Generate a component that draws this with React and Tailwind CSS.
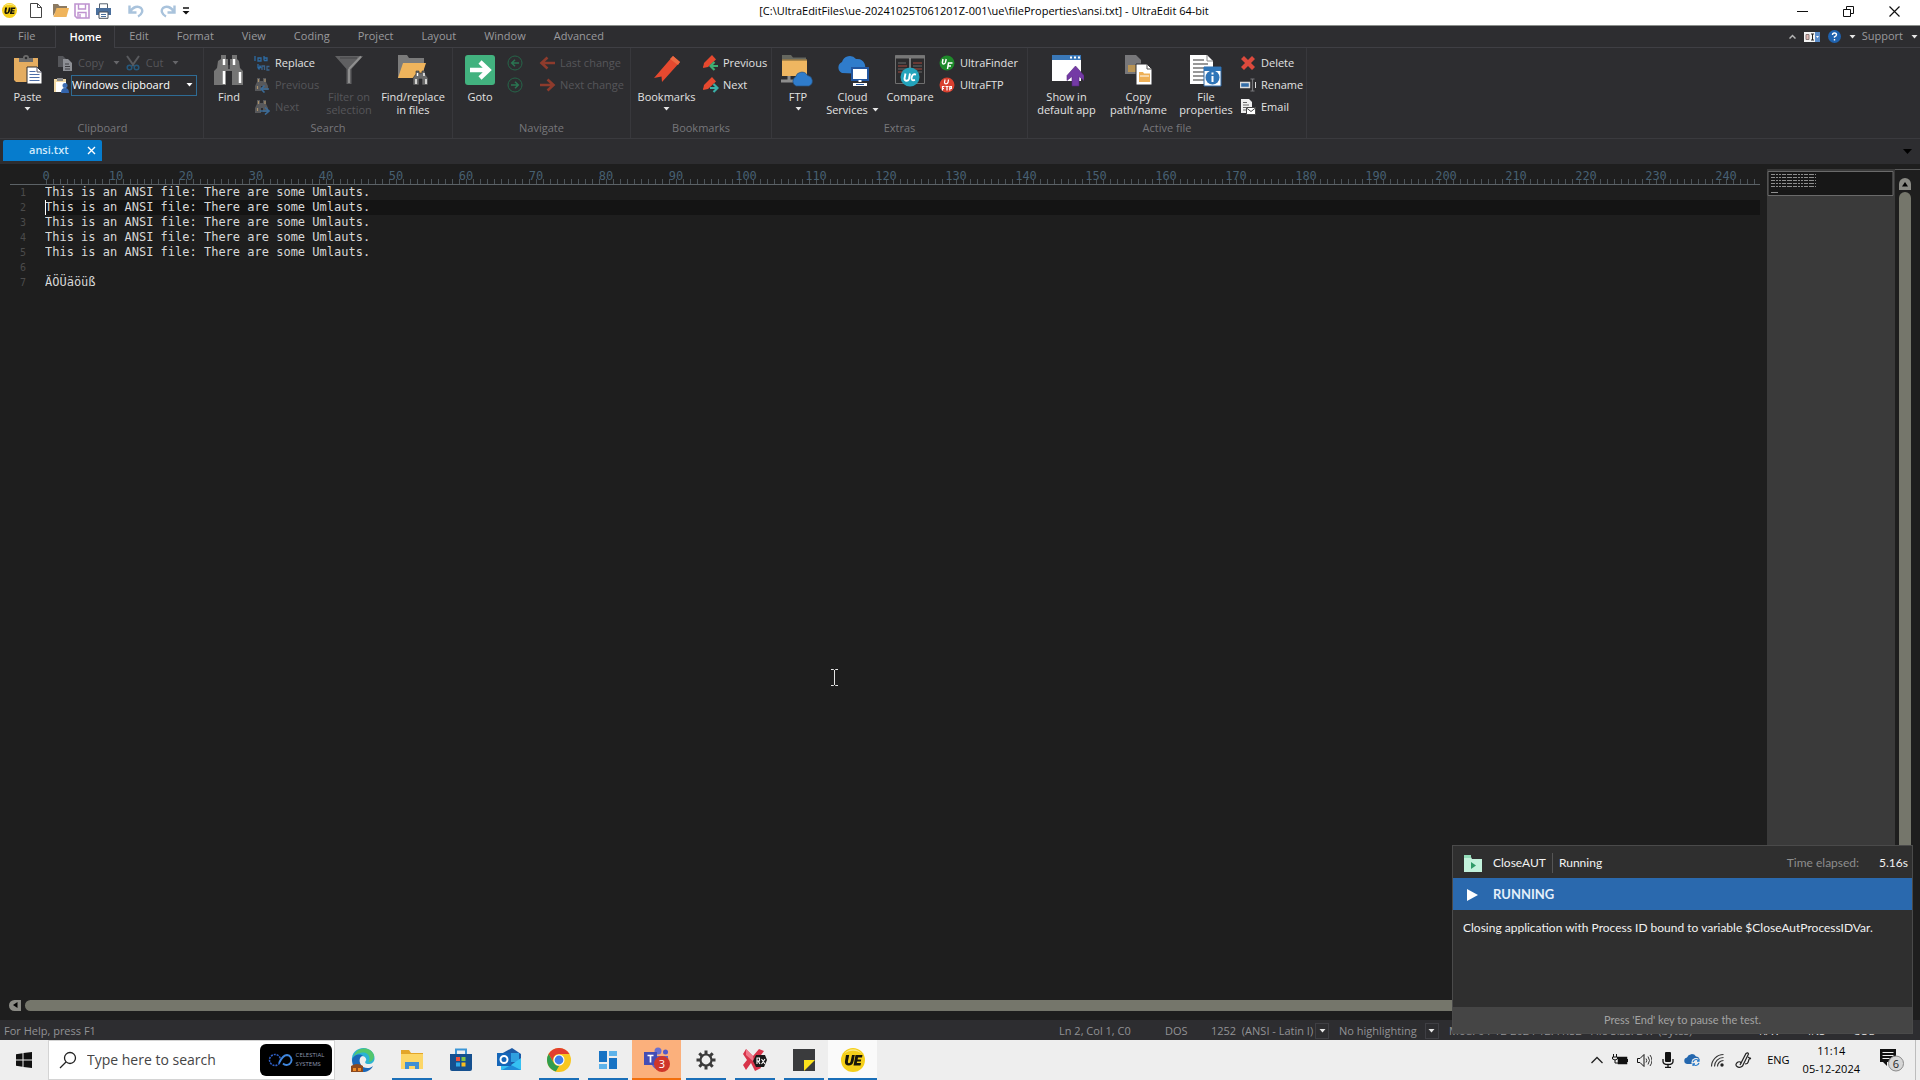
import React from "react";

const UI = "font-['Open_Sans','Noto_Sans',sans-serif]";

function Svg({ w = 16, h, vb, className = "", children }) {
  const hh = h || w;
  return (
    <svg width={w} height={hh} viewBox={vb || `0 0 ${w} ${hh}`} className={`shrink-0 ${className}`} aria-hidden="true">
      {children}
    </svg>
  );
}

const Caret = ({ color = "#e6e6e6", className = "" }) => (
  <Svg w={7} h={4} className={className}>
    <path d="M0.5 0h6L3.5 3.5z" fill={color} />
  </Svg>
);

function UEBadge({ w }) {
  return (
    <Svg w={w} vb="0 0 24 24">
      <circle cx="12" cy="12" r="12" fill="#f5cf1a" />
      <path d="M3 6a11 11 0 0 1 18 0a14 14 0 0 0-18 0z" fill="#fbe98a" />
      <path d="M5 7h3.200l-1.300 6.500q-.3 1.700 1 1.700t1.700-1.700L11 7h2.800l-1.300 6.600q-.8 3.900-4.800 3.900t-3.800-3.700zM14.500 7h7l-.5 2.400h-4l-.4 2h3.600l-.4 2.200h-3.600l-.4 1.500h4.200l-.5 2.300h-7z" fill="#17150a" />
    </Svg>
  );
}

/* ---------- title bar icons ---------- */
const NewIcon = () => (
  <Svg w={14} h={17}><path d="M1.500 1.500h7l4 4v10h-11z" fill="#fff" stroke="#444" /><path d="M8.500 1.500v4h4" fill="none" stroke="#444" /></Svg>
);
const OpenIcon = () => (
  <Svg w={17} h={15}><path d="M1 13V1h5l1.500 2H15v4H5z" fill="#8b7a62" /><path d="M4.500 5H17l-2.500 9H1.500z" fill="#efb45c" /></Svg>
);
const SaveIcon = () => (
  <Svg w={16}><path d="M1 1h14v14H3l-2-2z" fill="#fff" stroke="#bf93d0" strokeWidth="1.600" /><path d="M4.500 1v5h7V1M4 15V9.500h8V15M6 11v4" fill="none" stroke="#bf93d0" strokeWidth="1.400" /></Svg>
);
const PrintIcon = () => (
  <Svg w={17} h={16}><path d="M4.500 5V.8h8V5" fill="#fff" stroke="#56616e" /><path d="M1 5h15v7H1z" fill="#4a6f9c" /><path d="M4 9h9v6.300H4z" fill="#fff" stroke="#46505c" /><path d="M6 11.500h5M6 13.500h5" stroke="#4a6f9c" /></Svg>
);
const UndoIcon = ({ flip }) => (
  <Svg w={16} h={14} className={flip ? "-scale-x-100" : ""}>
    <path d="M1.500 1.500v7h7M2 8C5 2.500 10 1.500 13 4c2.500 2.500 1 6.500-3 8.500" fill="none" stroke="#a9c3dc" strokeWidth="2.400" />
  </Svg>
);

/* ---------- ribbon icons, 32px ---------- */
const PasteIcon = () => (
  <Svg w={32}><path d="M2 4h24v24H4l-2-2z" fill="#e5ad60" /><path d="M7 8V4h4q0-3 3-3t3 3h4v4z" fill="#6c6c6c" /><circle cx="14" cy="4" r="1.300" fill="#2d2d30" /><path d="M15 13h10l5 5v12H15z" fill="#fff" stroke="#2d2d30" /><path d="M25 13v5h5" fill="none" stroke="#556" /><path d="M17.500 17.500h6M17.500 20.500h10M17.500 23.500h10M17.500 26.500h10" stroke="#4f6fa8" /></Svg>
);
const Bino = ({ w = 32 }) => (
  <Svg w={w} vb="0 0 32 32"><path d="M8 1h5v4h2v6h2V5h2V1h5v4l2 2 1 7 3 3v14H19V17h-6v14H1V17l3-3 1-7 3-2z" fill="#757575" /><path d="M11 5v6M11 17v13M21 5v6M27 18v11" stroke="#fff" strokeWidth="2.500" /><path d="M16 6v9" stroke="#2d2d30" strokeWidth="1.500" /></Svg>
);
const FunnelIcon = () => (
  <Svg w={28} h={30}><path d="M0 1h28L16.500 14v15h-5V14z" fill="#606062" /><path d="M14 14L26 1.500M14 14v14" stroke="#8f8f8f" strokeWidth="2" /><path d="M5 3h17" stroke="#525254" strokeWidth="2" /></Svg>
);
const FindFilesIcon = () => (
  <Svg w={32}><path d="M1 24V1h9l2 3h15v20z" fill="#7b7b7b" /><path d="M6 9h23l-5 15H1z" fill="#efb45c" /><path d="M19 17h3v2h3v-2h3v3l3 4v7h-6v-6h-3v6h-6v-7l3-4z" fill="#6b6b6b" stroke="#2d2d30" strokeWidth=".6" /><path d="M20.500 19v3M19 25v5M27 19v3M29 25v5" stroke="#fff" strokeWidth="1.400" /></Svg>
);
const GotoIcon = () => (
  <Svg w={32}><rect x="1" y="1" width="30" height="30" rx="3" fill="#42b27f" /><path d="M6 16h17M16 8l8.500 8-8.500 8" fill="none" stroke="#fff" strokeWidth="4.500" /></Svg>
);
const BookmarkIcon = () => (
  <Svg w={32}><path d="M22 2l7 6-18 20-.5-5.500L3 24z" fill="#e6492f" /><path d="M22 2l7 6-2 3-8-6z" fill="#ec6a42" /></Svg>
);
const FtpIcon = () => (
  <Svg w={34} h={33}><path d="M1 1h9l2 2.500h13V22H1z" fill="#65675f" /><path d="M1 6h25v16H1z" fill="#efb661" /><path d="M1 6h25" stroke="#9a7a45" strokeWidth="1.500" /><path d="M8 22v4M0 27h13" stroke="#8d8d8d" strokeWidth="3" /><path d="M15 32a5 5 0 0 1-.5-9 6.500 6.500 0 0 1 12-1.500 5.500 5.500 0 0 1 1.500 10.500z" fill="#2f7ccb" stroke="#26517e" strokeWidth=".7" /></Svg>
);
const CloudIcon = () => (
  <Svg w={34} h={33}><path d="M6 19a6 6 0 0 1 0-11A8 8 0 0 1 20 5a8 8 0 0 1 9 10v5z" fill="#2f7ccb" /><path d="M16 14h16v12H16z" fill="#fff" stroke="#2256a0" strokeWidth="2" /><path d="M24 26v2M17 30.500h14" stroke="#fff" strokeWidth="3" /><path d="M20 30.500h8" stroke="#2256a0" /></Svg>
);
const CompareIcon = () => (
  <Svg w={32} h={33}><path d="M1.500 1.500h29v28h-29z" fill="#2b2b2d" stroke="#6f6f6f" /><path d="M1 3h30" stroke="#777" strokeWidth="3" /><path d="M16 4v12" stroke="#9a9a9a" strokeWidth="1.500" /><path d="M4 12h9M4 18h6M19 9h9M19 15h9" stroke="#aa4a3e" /><path d="M4 9h8M4 15h8M19 12h9M24 18h4" stroke="#6b6b6b" /><circle cx="16" cy="23" r="9.500" fill="#23a3bb" /><path d="M11.500 19.500l-1 5q0 2.200 2 2.200t2.600-2.200l.9-5M22 20.600q-3.300-1.400-4.300 2.600t3.300 2.700" fill="none" stroke="#fff" strokeWidth="1.900" /></Svg>
);
const ShowAppIcon = () => (
  <Svg w={34} h={33}><path d="M2 1h29v26H2z" fill="#fff" /><path d="M2 1h29v5H2z" fill="#3a78b8" /><path d="M20 3.500h2M24 3.500h2M28 3.500h2" stroke="#fff" strokeWidth="2" /><path d="M25.500 12l8.500 9.500v5l-5-4V32h-7v-9.500l-5 4v-5z" fill="#743aa5" stroke="#55267e" strokeWidth=".6" /></Svg>
);
const CopyPathIcon = () => (
  <Svg w={32}><path d="M2 1h11l5 5v14H2z" fill="#77777a" /><path d="M5 11h9v7H5z" fill="#b99455" /><path d="M13 10h11l5 5v16H13z" fill="#fff" stroke="#2d2d30" /><path d="M24 10v5h5" fill="none" stroke="#555" /><path d="M16 18h4l1 1.500h6V28H16z" fill="#eeb057" /><path d="M17 22h9" stroke="#fff" /></Svg>
);
const FilePropsIcon = () => (
  <Svg w={34} h={33}><path d="M1 1h17l6 6v23H1z" fill="#fff" /><path d="M18 1v6h6" fill="none" stroke="#888" /><path d="M4 6h11M4 10h15M4 14h17M4 18h12M4 22h12M4 26h12" stroke="#777" strokeWidth="1.300" /><path d="M15 13h17v19H15z" fill="#fff" stroke="#2f6ba8" strokeWidth="1" /><path d="M15 13h17v4H15z" fill="#2f75b8" /><circle cx="23.500" cy="23.500" r="7" fill="#2f75b8" /><path d="M23.500 22v6M23.500 18.500v2" stroke="#fff" strokeWidth="2" /></Svg>
);

/* ---------- ribbon icons, 16px ---------- */
const CopyIcon = () => (
  <Svg><path d="M1 1h5l3 3v8H1z" fill="#55565a" /><path d="M6 4h5l4 4v8H6z" fill="#8d8f94" /><path d="M8 9h4M8 11.500h5M8 14h5" stroke="#3c3c40" /></Svg>
);
const CutIcon = () => (
  <Svg><path d="M2 1l7 10M14 1L7 11" stroke="#595a5e" strokeWidth="2" /><circle cx="4.500" cy="12.500" r="2.300" fill="none" stroke="#25587c" strokeWidth="1.500" /><circle cx="11.500" cy="12.500" r="2.300" fill="none" stroke="#25587c" strokeWidth="1.500" /></Svg>
);
const ClipUserIcon = () => (
  <Svg><path d="M1 2h12v13H1z" fill="#f1d9a6" /><path d="M3 5h10v10H3z" fill="#fff" /><path d="M4 1h6v3H4z" fill="#8a8a8a" /><circle cx="12" cy="8.500" r="2.500" fill="#3f6fb5" /><path d="M8 16q0-5 4-5t4 5z" fill="#3465ad" /></Svg>
);
const ReplaceIcon = () => (
  <Svg><path d="M1 1v5M4 6V3h3v3zM10 5.500V1M10 5.500h3V3h-3M4 9v3.500h3l-1.500-2M4 12.500l1.500 2" fill="none" stroke="#2d6ba3" strokeWidth="1.300" /><path d="M8 15v-4h2.500v4M15.500 11.500h-2.500V15h2.500" fill="none" stroke="#3a6188" strokeWidth="1.300" /></Svg>
);
const FindSmall = ({ right }) => (
  <Svg><path d="M3 1h3v3h3V1h3v4l2 4v4H9V9H7v5H1V9l2-4z" fill="#57585b" /><path d="M4.500 2v3M3.500 9v3M11 2v3" stroke="#a9906a" strokeWidth="1.200" />{right ? <path d="M6 12h8M11 8.500l4 3.500-4 3.500" fill="none" stroke="#3a6b98" strokeWidth="1.600" /> : <path d="M15 12H8M10.500 8.500L7 12l3.500 3.500" fill="none" stroke="#3a6b98" strokeWidth="1.600" />}</Svg>
);
const CircleArrow = ({ right }) => (
  <Svg className={right ? "" : "-scale-x-100"}><circle cx="8" cy="8" r="7" fill="none" stroke="#266549" /><path d="M4 8h7M8 4.800L11.300 8 8 11.200" fill="none" stroke="#2a7552" strokeWidth="1.500" /></Svg>
);
const RedArrow = ({ right }) => (
  <Svg w={17} h={14} className={right ? "" : "-scale-x-100"}><path d="M1 7h13M8.500 1.500L14.500 7l-6 5.500" fill="none" stroke="#8e3b2c" strokeWidth="2.600" /></Svg>
);
const MarkSmall = ({ right }) => (
  <Svg w={17} h={16}><path d="M10 0l4 4.500L6 12l-5 1 1-5z" fill="#e6492f" /><path d="M7 4l-6 8 5-1z" fill="#e6492f" />{right ? <path d="M8 11h7M11.500 7l4 4-4 4" fill="none" stroke="#3ab0a8" strokeWidth="2.200" /> : <path d="M9 11h7M12.500 7l-4 4 4 4" fill="none" stroke="#3fae72" strokeWidth="2.200" />}</Svg>
);
const UFIcon = () => (
  <Svg><circle cx="8" cy="8" r="7.500" fill="#1e8a2a" /><path d="M4 4l-.6 3.400q0 1.600 1.300 1.600t1.800-1.600L7.200 4M8.500 14l1-6h4M9 11h3" fill="none" stroke="#fff" strokeWidth="1.500" /></Svg>
);
const UFtpIcon = () => (
  <Svg><circle cx="8" cy="8" r="7.500" fill="#d9402f" /><path d="M6 2.500l-.5 3q0 1.400 1.500 1.400t2-1.400l.5-3M3.500 13.500v-4h2M3.500 11.500h1.500M6.500 9.500h3M8 9.500v4M10.800 13.500v-4h1.600v2h-1.600" fill="none" stroke="#fff" strokeWidth="1.200" /></Svg>
);
const DeleteIcon = () => (
  <Svg><path d="M4 1l4 4 4-4 3 3-4 4 4 4-3 3-4-4-4 4-3-3 4-4-4-4z" fill="#dc4a3d" /></Svg>
);
const RenameIcon = () => (
  <Svg><path d="M.5 5.500h9v5h-9z" fill="#336da8" stroke="#dcdcdc" strokeWidth="1.400" /><path d="M12.500 2v12M10.500 2h4M10.500 14h4" stroke="#77777a" strokeWidth="1.200" /><path d="M15.500 5v6" stroke="#ddd" /></Svg>
);
const EmailIcon = () => (
  <Svg><path d="M1 0h8l3 3v11H1z" fill="#efefef" /><path d="M3 3.500h4M3 6h6M3 8.500h3M3 11h3" stroke="#666" /><path d="M6.500 8.500h9v7h-9z" fill="#fff" stroke="#444" /><path d="M6.500 9l4.500 3.500L15.500 9" fill="none" stroke="#444" /></Svg>
);

/* ---------- ribbon building blocks ---------- */
function Big({ icon, lines, caret, inlineCaret, disabled, className }) {
  return (
    <button type="button" disabled={disabled} className={`flex flex-col items-center pt-1.5 ${disabled ? "text-[#56565a]" : "text-[#e2e2e2]"} ${className}`}>
      <span className="flex h-8 items-center justify-center">{icon}</span>
      <span className="mt-1 flex flex-col items-center text-[11px] leading-[13px] whitespace-nowrap">
        <span>{lines[0]}</span>
        {lines[1] && (
          <span className="flex items-center gap-1">
            {lines[1]}
            {inlineCaret && <Caret />}
          </span>
        )}
      </span>
      {caret && <Caret className="mt-1" />}
    </button>
  );
}

function Small({ icon, label, disabled, caret }) {
  return (
    <button type="button" disabled={disabled} className={`flex h-[22px] items-center gap-[5px] text-[11px] whitespace-nowrap ${disabled ? "text-[#56565a]" : "text-[#e2e2e2]"}`}>
      <span className="flex w-4 justify-center">{icon}</span>
      {label}
      {caret && <Caret color="#66666a" className="ml-1" />}
    </button>
  );
}

function Group({ label, className, children }) {
  return (
    <section aria-label={label} className={`flex flex-col border-r border-[#38383c] ${className}`}>
      <div className="flex h-[72px]">{children}</div>
      <div className="text-center text-[11px] leading-4 text-[#77777b]">{label}</div>
    </section>
  );
}

const Col = ({ className = "", children }) => <div className={`flex flex-col items-start pt-1 ${className}`}>{children}</div>;

function TitleBar() {
  return (
    <header className="grid h-[25px] grid-cols-[1fr_auto_1fr] items-center bg-white text-black">
      <div className="flex items-center pb-1 pl-0.5">
        <span className="mr-3"><UEBadge w={15} /></span>
        <div className="flex items-center gap-[5px]">
          <button type="button" aria-label="New" className="mr-1"><NewIcon /></button>
          <button type="button" aria-label="Open"><OpenIcon /></button>
          <button type="button" aria-label="Save"><SaveIcon /></button>
          <button type="button" aria-label="Print"><PrintIcon /></button>
        </div>
        <button type="button" aria-label="Undo" className="ml-4"><UndoIcon /></button>
        <button type="button" aria-label="Redo" className="ml-4"><UndoIcon flip /></button>
        <button type="button" aria-label="Customize toolbar" className="ml-1.5">
          <Svg w={8} h={8}><path d="M1 1h6" stroke="#111" strokeWidth="1.500" /><path d="M.5 4h7L4 7.500z" fill="#111" /></Svg>
        </button>
      </div>
      <h1 className="pb-1 pl-12 text-[11px] leading-4 whitespace-pre">[C:\UltraEditFiles\ue-20241025T061201Z-001\ue\fileProperties\ansi.txt] - UltraEdit 64-bit</h1>
      <div className="flex items-center justify-end gap-[35px] pr-5 pb-0.5">
        <button type="button" aria-label="Minimize"><Svg w={11}><path d="M0 5.500h11" stroke="#111" /></Svg></button>
        <button type="button" aria-label="Restore"><Svg w={11}><path d="M.5 3.500h7v7h-7zM3.500 3V.5h7v7H8" fill="none" stroke="#111" /></Svg></button>
        <button type="button" aria-label="Close"><Svg w={11}><path d="M.5.5l10 10M10.500.5l-10 10" stroke="#111" strokeWidth="1.200" /></Svg></button>
      </div>
    </header>
  );
}

function MenuTabs() {
  const tabs = ["File", "Home", "Edit", "Format", "View", "Coding", "Project", "Layout", "Window", "Advanced"];
  return (
    <nav className="flex h-[23px] border-t border-[#8b8f8b] bg-[#2d2d30] text-[11px] text-[#9a9a9d]">
      <ul className="flex flex-1 border-b border-[#3f3f44] pl-1">
        {tabs.map((t) => (
          <li key={t} className={t === "Home" ? "-mb-px ml-1.5 border-x border-[#3f3f44] bg-[#2d2d30]" : ""}>
            <button type="button" className={`h-full ${t === "Home" ? "px-[13px] font-semibold text-white" : "px-3.5"}`}>{t}</button>
          </li>
        ))}
      </ul>
      <div className="flex items-center border-b border-[#3f3f44] pr-0.5">
        <button type="button" aria-label="Collapse ribbon" className="mr-2"><Svg w={7} h={5}><path d="M.5 4.500l3-3 3 3" fill="none" stroke="#b5b5b5" strokeWidth="1.500" /></Svg></button>
        <button type="button" aria-label="Layout switcher" className="mr-2"><Svg w={16} h={10}><path d="M0 0h16v10H0z" fill="#f4f4f4" /><path d="M2 2.500h3v5H2z" fill="#e0b9b4" stroke="#8c7b78" /><path d="M7 2h3M8.500 2v6M7 8h3" stroke="#222" /><path d="M11 0h5v10h-5z" fill="#5b8dc9" /><path d="M12 4h3l-1.500 2z" fill="#fff" /></Svg></button>
        <button type="button" aria-label="Help" className="mr-2"><Svg w={13}><circle cx="6.500" cy="6.500" r="6.500" fill="#1f62ae" /><path d="M4.500 5q0-2 2-2t2 1.800q0 1.200-2 2v1M6.500 9v1.500" fill="none" stroke="#fff" strokeWidth="1.400" /></Svg></button>
        <Caret className="mr-1.5" />
        <button type="button" className="mr-2">Support</button>
        <Caret />
      </div>
    </nav>
  );
}

function Ribbon() {
  return (
    <div className="flex h-[91px] border-b border-[#3a3a3e] bg-[#2d2d30] pl-0.5">
      <Group label="Clipboard" className="w-[202px]">
        <Big icon={<PasteIcon />} lines={["Paste"]} caret className="w-[51px]" />
        <Col>
          <div className="flex gap-[5px] pl-1">
            <Small icon={<CopyIcon />} label="Copy" disabled caret />
            <Small icon={<CutIcon />} label="Cut" disabled caret />
          </div>
          <div className="flex h-[22px] items-center gap-0.5">
            <ClipUserIcon />
            <span className="relative flex items-center">
              <select aria-label="Clipboard" className="h-[21px] w-[126px] appearance-none border border-[#2e6b94] bg-[#2d2d30] text-[11px] text-white">
                <option>Windows clipboard</option>
              </select>
              <Caret className="pointer-events-none absolute right-1" color="#fff" />
            </span>
          </div>
        </Col>
      </Group>
      <Group label="Search" className="w-[249px]">
        <Big icon={<Bino />} lines={["Find"]} className="w-[50px]" />
        <Col className="w-[63px]">
          <Small icon={<ReplaceIcon />} label="Replace" />
          <Small icon={<FindSmall />} label="Previous" disabled />
          <Small icon={<FindSmall right />} label="Next" disabled />
        </Col>
        <Big icon={<FunnelIcon />} lines={["Filter on", "selection"]} disabled className="w-16" />
        <Big icon={<FindFilesIcon />} lines={["Find/replace", "in files"]} className="w-16" />
      </Group>
      <Group label="Navigate" className="w-[178px]">
        <Big icon={<GotoIcon />} lines={["Goto"]} className="w-[54px]" />
        <Col className="w-8">
          <button type="button" aria-label="Back" disabled className="flex h-[22px] items-center"><CircleArrow /></button>
          <button type="button" aria-label="Forward" disabled className="flex h-[22px] items-center"><CircleArrow right /></button>
        </Col>
        <Col>
          <Small icon={<RedArrow />} label="Last change" disabled />
          <Small icon={<RedArrow right />} label="Next change" disabled />
        </Col>
      </Group>
      <Group label="Bookmarks" className="w-[141px]">
        <Big icon={<BookmarkIcon />} lines={["Bookmarks"]} caret className="w-[71px]" />
        <Col>
          <Small icon={<MarkSmall />} label="Previous" />
          <Small icon={<MarkSmall right />} label="Next" />
        </Col>
      </Group>
      <Group label="Extras" className="w-[256px]">
        <Big icon={<FtpIcon />} lines={["FTP"]} caret className="w-[52px]" />
        <Big icon={<CloudIcon />} lines={["Cloud", "Services"]} inlineCaret className="w-[57px]" />
        <Big icon={<CompareIcon />} lines={["Compare"]} className="w-[58px]" />
        <Col>
          <Small icon={<UFIcon />} label="UltraFinder" />
          <Small icon={<UFtpIcon />} label="UltraFTP" />
        </Col>
      </Group>
      <Group label="Active file" className="w-[279px]">
        <Big icon={<ShowAppIcon />} lines={["Show in", "default app"]} className="w-[77px]" />
        <Big icon={<CopyPathIcon />} lines={["Copy", "path/name"]} className="w-[67px]" />
        <Big icon={<FilePropsIcon />} lines={["File", "properties"]} className="w-[68px]" />
        <Col>
          <Small icon={<DeleteIcon />} label="Delete" />
          <Small icon={<RenameIcon />} label="Rename" />
          <Small icon={<EmailIcon />} label="Email" />
        </Col>
      </Group>
    </div>
  );
}

function FileTabs() {
  return (
    <div className="flex h-[25px] items-center justify-between bg-[#2d2d30] pr-2 pl-[3px]">
      <div className="mb-0.5 flex h-[21px] items-center rounded-t-xs bg-[#067ccd] pr-1.5 pl-[26px] text-[11px] font-semibold text-[#cfe9fb]">
        <button type="button">ansi.txt</button>
        <button type="button" aria-label="Close ansi.txt" className="ml-[18px]">
          <Svg w={9}><path d="M1 1l7 7M8 1L1 8" stroke="#fff" strokeWidth="1.400" /></Svg>
        </button>
      </div>
      <button type="button" aria-label="Open files"><Svg w={9} h={6}><path d="M0 0h9L4.500 5z" fill="#000" /></Svg></button>
    </div>
  );
}

const MARKS = Array.from({ length: 25 }, (_, i) => i * 10);
const TEXT_LINE = "This is an ANSI file: There are some Umlauts.";
const DOC = [TEXT_LINE, TEXT_LINE, TEXT_LINE, TEXT_LINE, TEXT_LINE, "", "ÄÖÜäöüß"].join("\n");
const MONO = "font-['DejaVu_Sans_Mono','Liberation_Mono',monospace]";

function Ruler() {
  return (
    <div className={`ml-2 flex h-[17px] overflow-hidden border-b border-[#5c6266] ${MONO}`}>
      {MARKS.map((m) => (
        <div key={m} className="relative h-full w-[70px] shrink-0 bg-[repeating-linear-gradient(to_right,#4c5459_0px,#4c5459_1px,transparent_1px,transparent_7px)] bg-[length:70px_5px] bg-[position:0_100%] bg-no-repeat first:ml-9">
          <span className="absolute top-0 left-0 -translate-x-1/2 text-xs leading-4 text-[#476072]">{m}</span>
        </div>
      ))}
    </div>
  );
}

function Editor() {
  return (
    <div className="flex min-h-0 flex-1 bg-[#1e1e1e] pl-0.5">
      <div className="flex min-w-0 flex-1 flex-col pt-1">
        <div className="mr-[7px]"><Ruler /></div>
        <div className={`flex flex-1 ${MONO}`}>
          <div className="w-[43px] pr-[19px] text-right text-[10px] leading-[15px] text-[#4b4b4b]">
            {[1, 2, 3, 4, 5, 6, 7].map((n) => (<div key={n}>{n}</div>))}
          </div>
          <div className="relative flex flex-1">
            <textarea
              aria-label="ansi.txt contents"
              spellCheck={false}
              defaultValue={DOC}
              className="mr-[7px] flex-1 resize-none overflow-hidden border-0 bg-[linear-gradient(#141414,#141414)] bg-[length:100%_15px] bg-[position:0_15px] bg-no-repeat p-0 text-xs leading-[15px] text-[#d8d8d8] outline-none"
            />
            <span className="absolute top-[15px] left-0 h-[15px] w-px bg-white" />
            <svg className="absolute top-[484px] left-[785px]" width="9" height="17" viewBox="0 0 9 17" aria-hidden="true">
              <path d="M1 .5h2.500l1 1 1-1H8M4.500 1v15M1 16.500h2.500l1-1 1 1H8" fill="none" stroke="#e4e4e4" />
            </svg>
          </div>
        </div>
      </div>
      <div className="mt-[5px] w-[128px] bg-[#3a3a3a]">
        <svg width="127" height="28" viewBox="0 0 127 28" aria-hidden="true">
          <path d="M1 2.500h125v24H1z" fill="#171717" stroke="#6a6a6a" />
          {[5, 8, 11, 14, 17].map((y) => (
            <path key={y} d={`M4 ${y}.5h45`} stroke="#8e8e8e" strokeDasharray="4 1 2 1 2 1 4 1 5 1" />
          ))}
          <path d="M4 23.500h7" stroke="#8e8e8e" />
        </svg>
      </div>
      <div className="mt-[5px] flex w-[25px] flex-col border-t border-[#5a5a5a] pt-2 pr-[9px] pl-1">
        <button type="button" aria-label="Scroll up" className="flex h-3 items-center justify-center rounded-t-md bg-[#8a8a84]">
          <Svg w={6} h={5}><path d="M3 0l3 4.500H0z" fill="#000" /></Svg>
        </button>
        <div className="mt-0.5 flex-1 rounded-md bg-[#75766b]" />
      </div>
    </div>
  );
}

function HScroll() {
  return (
    <div className="flex h-[30px] items-center gap-1 bg-[#1e1e1e] pr-[154px] pl-[9px]">
      <button type="button" aria-label="Scroll left" className="flex h-[11px] w-3 items-center justify-center rounded-l-md bg-[#8a8a84]">
        <Svg w={5} h={6}><path d="M0 3l4.500-3v6z" fill="#000" /></Svg>
      </button>
      <div className="h-[11px] flex-1 rounded-md bg-[#75766b]" />
    </div>
  );
}

const DropBox = ({ className }) => (
  <span className={`flex h-4 w-3.5 items-center justify-center border border-[#3f3f44] ${className}`}><Caret /></span>
);

function StatusBar() {
  return (
    <footer className="flex h-5 items-center bg-[#2d2d30] pt-0.5 pr-8 pl-1 text-[11px] whitespace-nowrap text-[#929295]">
      <span className="flex-1">For Help, press F1</span>
      <span className="w-[106px]">Ln 2, Col 1, C0</span>
      <span className="w-[46px]">DOS</span>
      <button type="button" className="flex w-32 items-center whitespace-pre">1252  (ANSI - Latin I)<DropBox className="ml-0.5" /></button>
      <button type="button" className="flex w-[110px] items-center">No highlighting<DropBox className="ml-2" /></button>
      <span className="w-[310px] whitespace-pre">Mod: 04-12-2024 12:41:52   File Size: 247 (bytes)</span>
      <span className="w-[49px] text-[#d8d8d8]">R/W</span>
      <span className="w-[45px] text-[#d8d8d8]">INS</span>
      <span className="w-[35px] text-[#d8d8d8]">COL</span>
    </footer>
  );
}

function Popup() {
  return (
    <aside className="absolute right-[7px] bottom-[46px] flex h-[189px] w-[461px] flex-col border border-[#4a4a4a] bg-[#2f2f2f] font-['Lato','Open_Sans',sans-serif] text-xs text-[#f2f2f2]">
      <div className="flex h-8 items-center pt-0.5 pr-1 pl-[11px]">
        <Svg w={18} h={17}><path d="M0 2h7l1 2h10v13H0z" fill="#c3f2dc" /><path d="M0 0h7v3H0z" fill="#93dcb8" /><path d="M7 7l5 3.500L7 14z" fill="#2f9a68" /></Svg>
        <span className="ml-[11px]">CloseAUT</span>
        <span className="mx-1.5 h-5 w-px bg-[#555]" />
        <span className="flex-1">Running</span>
        <span className="text-[#8d8d8d]">Time elapsed:</span>
        <span className="ml-5">5.16s</span>
      </div>
      <div className="flex h-8 items-center bg-[#2a69ae] pt-0.5 pl-3.5 text-[13px] font-bold text-[#e4effa]">
        <Svg w={11} h={12}><path d="M0 0l11 6L0 12z" fill="#fff" /></Svg>
        <span className="ml-[15px]">RUNNING</span>
      </div>
      <p className="flex-1 pt-2.5 pl-2.5">Closing application with Process ID bound to variable $CloseAutProcessIDVar.</p>
      <div className="h-[26px] bg-[#454545] text-center text-[11px] leading-[26px] text-[#a3a3a3]">Press 'End' key to pause the test.</div>
    </aside>
  );
}

/* ---------- taskbar ---------- */
const EdgeIcon = () => (
  <Svg w={24} vb="0 0 24 24"><path d="M1 13C0 5 6 0 12.500 0S24 5 23.500 11c-.5 4-4 5.500-7 5s-2.500-2-1.500-3.500S14 8 11 8s-6 3-6 7z" fill="#2bb3d3" /><path d="M5 4C9-1 19-1 22.500 6c1.500 4-1 8-5 8 3-5-1-10-6-9.500S4 7 2 9z" fill="#53c66d" /><path d="M1 12c1-5 8-7 11-4-4 0-5 7 0 11 4 2 8 1 10-1-2 4-6 6-10 6C5 24 1 18 1 12z" fill="#1b68b8" /><path d="M0 18q6-4 12 0v6H0z" fill="#8d4a1e" /><path d="M2 20h3v3H2zM7 20h3v3H7z" fill="#f08a24" /></Svg>
);
const ExplorerIcon = () => (
  <Svg w={24} h={22}><path d="M1 1h8l2 3h12v6H1z" fill="#e3a62a" /><path d="M1 5h22v15H1z" fill="#fcd667" /><path d="M5 20v-7h14v7h-4v-3H9v3z" fill="#3f8fd4" /></Svg>
);
const StoreIcon = () => (
  <Svg w={24}><path d="M7 6V1.500h10V6" fill="none" stroke="#3b95d6" strokeWidth="2" /><path d="M1 6h22v15q0 2-2 2H3q-2 0-2-2z" fill="#15508f" /><path d="M7 9h4v4H7z" fill="#f0503c" /><path d="M12.500 9h4v4h-4z" fill="#80c342" /><path d="M7 14.500h4v4H7z" fill="#2fa8e8" /><path d="M12.500 14.500h4v4h-4z" fill="#fbbd1d" /></Svg>
);
const OutlookIcon = () => (
  <Svg w={25} h={24}><path d="M4 6l11-6 9 6v15H4z" fill="#1c5ba6" /><path d="M8 5h14v9H8z" fill="#2fa0e0" /><path d="M4 22V12l10 5 10-7v12z" fill="#35c0f2" /><path d="M14 17l10 5H5z" fill="#1f8bd8" /><path d="M0 5h14v13H0z" fill="#1566b8" /><circle cx="7" cy="11.500" r="3.500" fill="none" stroke="#fff" strokeWidth="2" /></Svg>
);
const ChromeIcon = () => (
  <Svg w={24}><circle cx="12" cy="12" r="12" fill="#f8c71f" /><path d="M1.600 6A12 12 0 0 1 22.400 6H12a6 6 0 0 0-5.200 9z" fill="#e23e30" /><path d="M1.600 6l5.200 9a6 6 0 0 0 5.500 3L9 23.600A12 12 0 0 1 1.600 6z" fill="#2f9d4e" /><path d="M12 24l5.200-9-5 3L9 23.600z" fill="#f8c71f" /><circle cx="12" cy="12" r="5.500" fill="#fff" /><circle cx="12" cy="12" r="4.400" fill="#3f7ee8" /></Svg>
);
const WidgetsIcon = () => (
  <Svg w={20} vb="0 0 20 20"><path d="M1 1h8v11H1zM11 8h8v11h-8z" fill="#1773c4" /><path d="M11 1h8v5h-8zM1 14h8v5H1z" fill="#5eb3ea" /></Svg>
);
const TeamsIcon = () => (
  <Svg w={28} h={26}><circle cx="15" cy="4" r="3.500" fill="#6a70d0" /><circle cx="22.500" cy="5" r="2.500" fill="#5059c9" /><path d="M8 9h17v7q-1 7-8 7t-9-8z" fill="#5d64cc" /><path d="M1 5h13v13H1z" fill="#444db4" /><path d="M4.500 8.500h6M7.500 8.500v7" stroke="#fff" strokeWidth="1.700" /><circle cx="19" cy="17" r="8" fill="#cf3629" /><text x="19" y="21" textAnchor="middle" fontSize="11" fill="#fff" fontFamily="Open Sans">3</text></Svg>
);
const GearIcon = () => (
  <Svg w={20} vb="0 0 20 20"><circle cx="10" cy="10" r="5.500" fill="none" stroke="#3b3b3b" strokeWidth="2.200" /><path d="M10 .5v4M10 15.500v4M.5 10h4M15.500 10h4M3.300 3.300l2.800 2.800M13.900 13.900l2.800 2.800M3.300 16.700l2.800-2.800M13.900 6.100l2.800-2.800" stroke="#3b3b3b" strokeWidth="3" /></Svg>
);
const RxIcon = () => (
  <Svg w={24} h={22}><path d="M3 0l7 7 6-7 5 2-6 8 3 9-6 3-4-8-5 7-3-5 4-5-4-6z" fill="#d8344a" /><path d="M3 0l7 7 1 6-8-7z" fill="#f0788a" /><path d="M13 6h9l2 5-3 7h-8l-3-6z" fill="#191919" /><path d="M14 15V9h2.500v3H14M15 12l2 3M18.500 10l3.500 5M22 10l-3.500 5" fill="none" stroke="#fff" strokeWidth="1.100" /></Svg>
);
const NotesIcon = () => (
  <Svg w={22}><path d="M0 0h22v22H0z" fill="#3a3b3d" /><path d="M11 11h11L11 22z" fill="#fbe21c" /></Svg>
);

const APPS = [
  ["Edge", <EdgeIcon />, false],
  ["File Explorer", <ExplorerIcon />, true],
  ["Microsoft Store", <StoreIcon />, false],
  ["Outlook", <OutlookIcon />, false],
  ["Chrome", <ChromeIcon />, true],
  ["Widgets", <WidgetsIcon />, true],
  ["Teams", <TeamsIcon />, true],
  ["Settings", <GearIcon />, true],
  ["Ranorex", <RxIcon />, true],
  ["Sticky Notes", <NotesIcon />, true],
  ["UltraEdit", <UEBadge w={24} />, true],
];

function Taskbar() {
  return (
    <nav aria-label="Taskbar" className="flex h-10 items-stretch bg-[#eeeeee] text-black">
      <button type="button" aria-label="Start" className="flex w-12 items-center justify-center">
        <Svg w={16}><path d="M0 2.200l6.500-1v6.300H0zM7.500 1L16 0v7.500H7.500zM0 8.500h6.500v6.300l-6.500-1zM7.500 8.500H16V16l-8.500-1z" fill="#111" /></Svg>
      </button>
      <label className="flex w-[287px] items-center border border-[#d4d4d4] bg-white pr-0.5 pl-2.5">
        <Svg w={18}><circle cx="11" cy="7" r="5.500" fill="none" stroke="#222" strokeWidth="1.300" /><path d="M7 11L1 17" stroke="#222" strokeWidth="1.300" /></Svg>
        <input type="text" aria-label="Search" placeholder="Type here to search" className="min-w-0 flex-1 bg-transparent pl-2.5 text-sm outline-none placeholder:text-[#454545]" />
        <span className="flex h-8 w-[72px] items-center justify-center gap-0.5 rounded-md bg-black text-[6px] leading-[9px] text-[#8b97ae]">
          <Svg w={26} h={14}><circle cx="7" cy="7" r="5.500" fill="none" stroke="#2f60c8" strokeWidth="1.500" strokeDasharray="2 1" /><path d="M11 10q4-8 8-8a5 5 0 1 1-4 8.500" fill="none" stroke="#3f86dc" strokeWidth="1.800" /></Svg>
          <span>CELESTIAL<br />SYSTEMS</span>
        </span>
      </label>
      <div className="flex pl-[3px]">
        {APPS.map(([name, icon, open]) => (
          <button key={name} type="button" aria-label={name} className={`flex w-[49px] flex-col items-center ${name === "Teams" ? "bg-[#fbb07c]" : name === "UltraEdit" ? "bg-[#fafafa]" : ""}`}>
            <span className="flex flex-1 items-center">{icon}</span>
            <span className={`-mt-0.5 h-0.5 ${name === "Teams" ? "w-full bg-[#f26f0c]" : name === "UltraEdit" ? "w-full bg-[#1a6fb8]" : open ? "w-10 bg-[#1a6fb8]" : "w-10"}`} />
          </button>
        ))}
      </div>
      <div className="ml-auto flex items-center gap-[9px] pr-1 text-[11px]">
        <Svg w={12} h={8}><path d="M.5 7L6 1.500 11.500 7" fill="none" stroke="#222" strokeWidth="1.300" /></Svg>
        <Svg w={16} h={12}><path d="M6.500 3.500h8v6h-8z" fill="#111" stroke="#111" strokeWidth="1.500" /><path d="M15.500 5v3" stroke="#111" /><path d="M1.500 0v3M4.500 0v3M.5 3h5v2q-2.500 2-5 0zM3 6v3h3" fill="none" stroke="#111" /></Svg>
        <Svg w={15} h={13}><path d="M.5 4.500h2.500l4-4v12l-4-4H.5z" fill="none" stroke="#111" /><path d="M9 4.500q1.500 2 0 4M11 2.500q3 4 0 8M13 1q4 5.500 0 11" fill="none" stroke="#333" /></Svg>
        <Svg w={14} h={16}><rect x="4" y="0" width="6" height="10" rx="1" fill="#111" /><path d="M2 7v2.500q0 3 5 3t5-3V7M7 12.500V15M4 15.500h6" fill="none" stroke="#111" strokeWidth="1.300" /></Svg>
        <Svg w={17} h={14}><path d="M3 11a3.300 3.300 0 0 1 0-6.500A5 5 0 0 1 12 3.500q3 0 3.500 3l-6 4.500z" fill="#2467ae" /><circle cx="12" cy="9.500" r="4.500" fill="#eee" /><path d="M9 9q1-2.500 3-2.500t3 1.500M15 10q-1 2.500-3 2.500T9 11M15 6v2.200h-2M9 13v-2.200h2" fill="none" stroke="#2578c8" strokeWidth="1.200" /></Svg>
        <Svg w={14} h={14}><path d="M1.500 13.500A12 12 0 0 1 13.500 1.500M4.500 13.500a9 9 0 0 1 9-9M7.500 13.500a6 6 0 0 1 6-6" fill="none" stroke="#333" strokeWidth="1.100" /><circle cx="12" cy="12" r="1.700" fill="#222" /></Svg>
        <Svg w={17} h={16} className="ml-0.5"><path d="M5 13L11 1.500q2-1.500 2.500.5L7.500 14q-3 2.500-5.500.5t1-4.500q3-1 3 2M10 12q3 0 3.500-3t2.500-3M13 5l3 2" fill="none" stroke="#222" strokeWidth="1.200" /></Svg>
        <span className="ml-1.5">ENG</span>
        <span className="ml-1 text-center leading-[18px]">11:14<br />05-12-2024</span>
        <button type="button" aria-label="Notifications, 6 new" className="ml-2.5 flex w-[31px]">
          <Svg w={26} h={24}><path d="M1 1h16v13H8v4l-4-4H1z" fill="#111" /><path d="M3.500 4.500h11M3.500 7.500h11M3.500 10.500h7" stroke="#eee" /><circle cx="17" cy="15.500" r="7.500" fill="#d6d6d6" stroke="#8a8a8a" /><text x="17" y="19.500" textAnchor="middle" fontSize="11" fill="#222" fontFamily="Open Sans">6</text></Svg>
        </button>
        <span className="-ml-1 h-full w-px bg-[#bdbdbd]" />
      </div>
    </nav>
  );
}

export default function App() {
  return (
    <div className={`relative flex h-screen flex-col overflow-hidden bg-[#1e1e1e] ${UI}`}>
      <TitleBar />
      <MenuTabs />
      <Ribbon />
      <FileTabs />
      <Editor />
      <HScroll />
      <StatusBar />
      <Taskbar />
      <Popup />
    </div>
  );
}
